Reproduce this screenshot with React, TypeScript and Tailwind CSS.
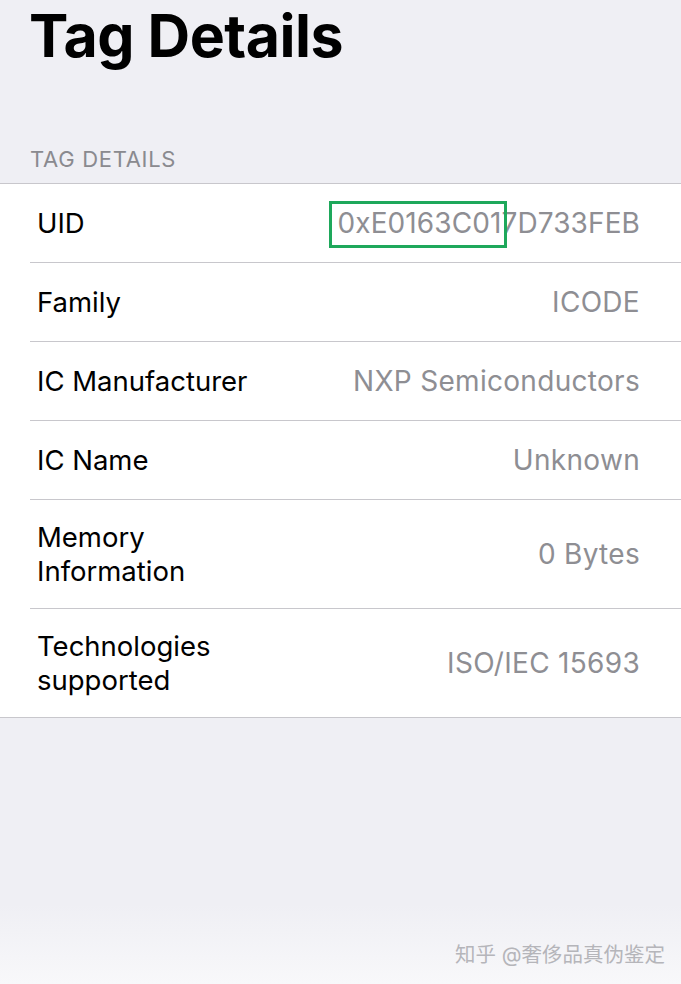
const rows: { label: string[]; value: string; tall?: boolean }[] = [
  { label: ['UID'], value: 'uid' },
  { label: ['Family'], value: 'ICODE' },
  { label: ['IC Manufacturer'], value: 'NXP Semiconductors' },
  { label: ['IC Name'], value: 'Unknown' },
  { label: ['Memory', 'Information'], value: '0 Bytes', tall: true },
  { label: ['Technologies', 'supported'], value: 'ISO/IEC 15693', tall: true },
];

export default function App() {
  return (
    <div className="relative h-[984px] w-[681px] overflow-hidden bg-[#efeff4] font-['Inter','Noto_Sans_CJK_SC',sans-serif]">
      <h1 className="pl-[29px] text-[59px] font-bold leading-[71px] tracking-[-0.5px] text-black">Tag Details</h1>
      <div className="pl-[30px] pt-[74px] pb-[10px] text-[22px] leading-[28px] tracking-[0.7px] text-[#8a8a8f]">TAG DETAILS</div>
      <div className="border-y border-[#c8c7cc] bg-white">
        {rows.map((r, i) => (
          <div key={i} className={'ml-[30px] flex items-center justify-between pr-[41px] pl-[7px] text-[27.5px] ' + (i > 0 ? 'border-t border-[#c8c7cc] ' : '') + (i === 0 ? 'h-[78px]' : r.tall ? 'h-[109px]' : 'h-[79px]')}>
            <div className="leading-[34px] text-black">
              {r.label.map((l) => (
                <div key={l}>{l}</div>
              ))}
            </div>
            {r.value === 'uid' ? (
              <div className="relative text-[28px] leading-[34px] tracking-[0.1px] text-[#8e8e93]">
                0xE0163C017D733FEB
                <div className="absolute left-[-9px] top-[-5px] h-[47px] w-[178px] border-[3px] border-[#1ea85b]" />
              </div>
            ) : (
              <div className="text-[28px] tracking-[0.3px] text-[#8e8e93]">{r.value}</div>
            )}
          </div>
        ))}
      </div>
      <div className="absolute bottom-0 left-0 h-[80px] w-full bg-gradient-to-b from-[#efeff4] to-[#f8f8fa]" />
      <div className="absolute left-[455px] top-[941px] text-[20.5px] leading-[28px] text-[#b5b5ba]">知乎 @奢侈品真伪鉴定</div>
    </div>
  );
}
